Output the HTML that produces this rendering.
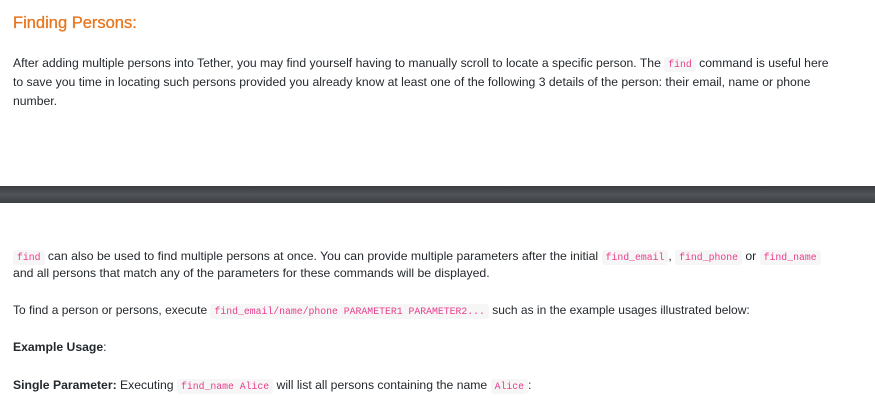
<!DOCTYPE html>
<html><head><meta charset="utf-8"><style>
body{margin:0;width:875px;height:404px;background:#fff;position:relative;overflow:hidden;font-family:"Liberation Sans",sans-serif;color:#24292e;font-size:12.2px}
.l{position:absolute;left:13px;white-space:nowrap;line-height:16px}
h1{position:absolute;left:13px;top:14px;margin:0;font-size:16.5px;font-weight:normal;color:#e8761e;-webkit-text-stroke:0.3px #e8761e}
code{font-family:"Liberation Mono",monospace;font-size:9.8px;color:#e83e8c;background:#f6f6f6;border-radius:3px;padding:2px 4px}
.bar{position:absolute;left:0;top:186px;width:875px;height:17px;background:linear-gradient(#3a3c3e,#50545a 50%,#3c3e40)}
b{font-weight:bold}
</style></head><body>
<h1>Finding Persons:</h1>
<div class="l" style="top:55px">After adding multiple persons into Tether, you may find yourself having to manually scroll to locate a specific person. The <code>find</code> command is useful here</div>
<div class="l" style="top:74px">to save you time in locating such persons provided you already know at least one of the following 3 details of the person: their email, name or phone</div>
<div class="l" style="top:93px">number.</div>
<div class="bar"></div>
<div class="l" style="top:248px;font-size:12.25px"><code>find</code> can also be used to find multiple persons at once. You can provide multiple parameters after the initial <code>find_email</code>, <code>find_phone</code> or <code>find_name</code></div>
<div class="l" style="top:265px;font-size:12.25px">and all persons that match any of the parameters for these commands will be displayed.</div>
<div class="l" style="top:302px;font-size:12px">To find a person or persons, execute <code>find_email/name/phone PARAMETER1 PARAMETER2...</code> such as in the example usages illustrated below:</div>
<div class="l" style="top:339px"><b>Example Usage</b>:</div>
<div class="l" style="top:377px"><b>Single Parameter:</b> Executing <code>find_name Alice</code> will list all persons containing the name <code>Alice</code>:</div>
</body></html>
